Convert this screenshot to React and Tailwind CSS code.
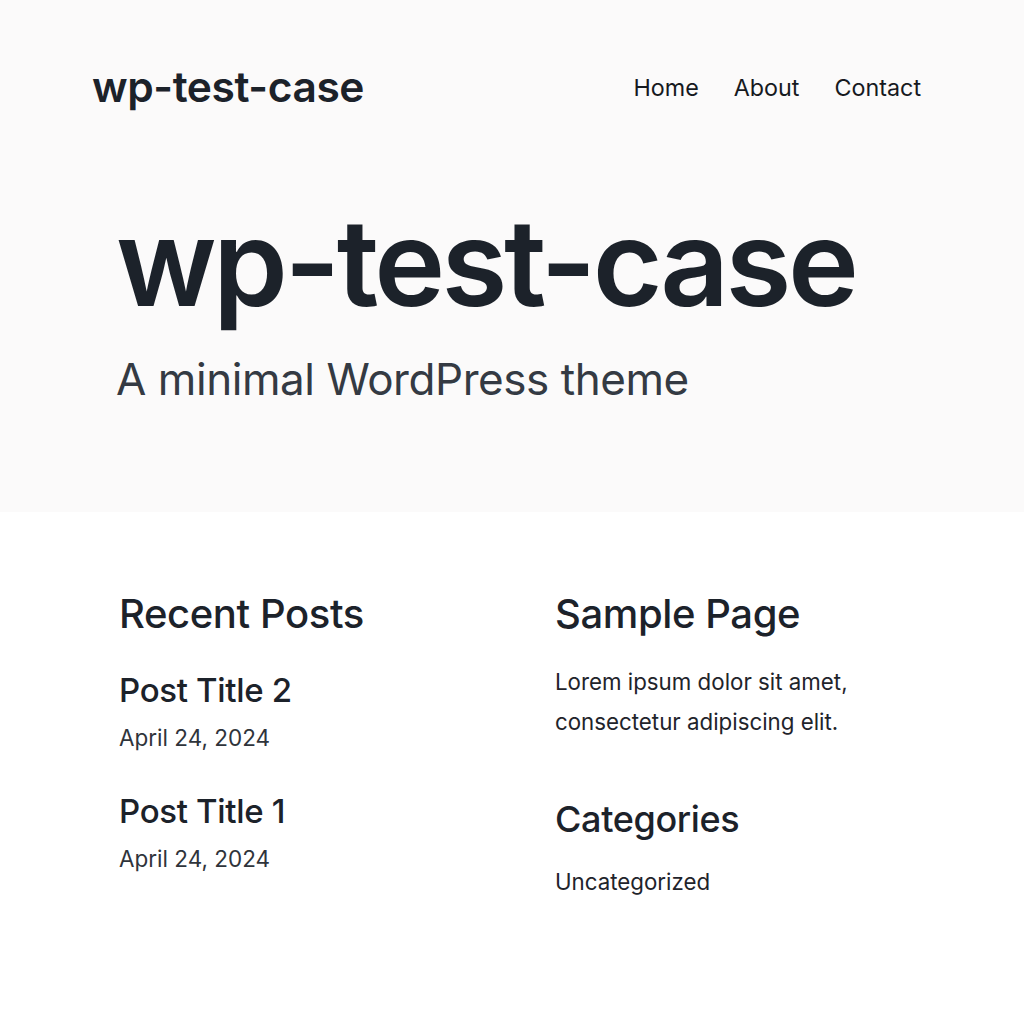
import React from 'react';

const posts = [
    { title: 'Post Title 2', date: 'April 24, 2024' },
    { title: 'Post Title 1', date: 'April 24, 2024' },
];

const App = () => {
    return (
        <div className="min-h-screen bg-white text-[#1c222a]" style={{ fontFamily: 'Inter, "Noto Sans", sans-serif' }}>
            {/* Cabecera + hero */}
            <section className="bg-[#fbfafa] h-[512px]">
                <header className="flex items-center justify-between pl-[92px] pr-[103px] pt-[67px] h-[108px]">
                    <a href="#" className="text-[42.5px] leading-none font-semibold tracking-[-0.01em]">wp-test-case</a>
                    <nav className="flex gap-[35px] text-[23.3px] leading-none text-[#16191e]">
                        <a href="#">Home</a>
                        <a href="#">About</a>
                        <a href="#">Contact</a>
                    </nav>
                </header>
                <div className="pl-[116px] pt-[95px]">
                    <h1 className="text-[120px] leading-none font-semibold tracking-[-0.03em]">wp-test-case</h1>
                    <p className="mt-[34px] text-[44px] leading-none text-[#343a43] tracking-[-0.01em]">A minimal WordPress theme</p>
                </div>
            </section>

            {/* Contenido */}
            <main className="grid grid-cols-[436px_1fr] pl-[119px] pt-[82px] pb-[100px]">
                <div>
                    <h2 className="text-[40px] leading-none font-medium tracking-[-0.01em]">Recent Posts</h2>
                    {posts.map((post, i) => (
                        <article key={post.title} className={i === 0 ? 'mt-[40px]' : 'mt-[45px]'}>
                            <h3 className="text-[33px] leading-none font-medium tracking-[-0.01em]">{post.title}</h3>
                            <p className="mt-[20px] text-[22.5px] leading-none text-[#2f343b]">{post.date}</p>
                        </article>
                    ))}
                </div>
                <div>
                    <h2 className="text-[40px] leading-none font-medium tracking-[-0.01em]">Sample Page</h2>
                    <p className="mt-[28px] text-[22.3px] leading-[40px] text-[#1f242b] max-w-[320px]">
                        Lorem ipsum dolor sit amet, consectetur adipiscing elit.
                    </p>
                    <h2 className="mt-[59px] text-[36px] leading-none font-medium tracking-[-0.01em]">Categories</h2>
                    <p className="mt-[34px] text-[22.3px] leading-none text-[#1f242b]">Uncategorized</p>
                </div>
            </main>
        </div>
    );
};

export default App;
